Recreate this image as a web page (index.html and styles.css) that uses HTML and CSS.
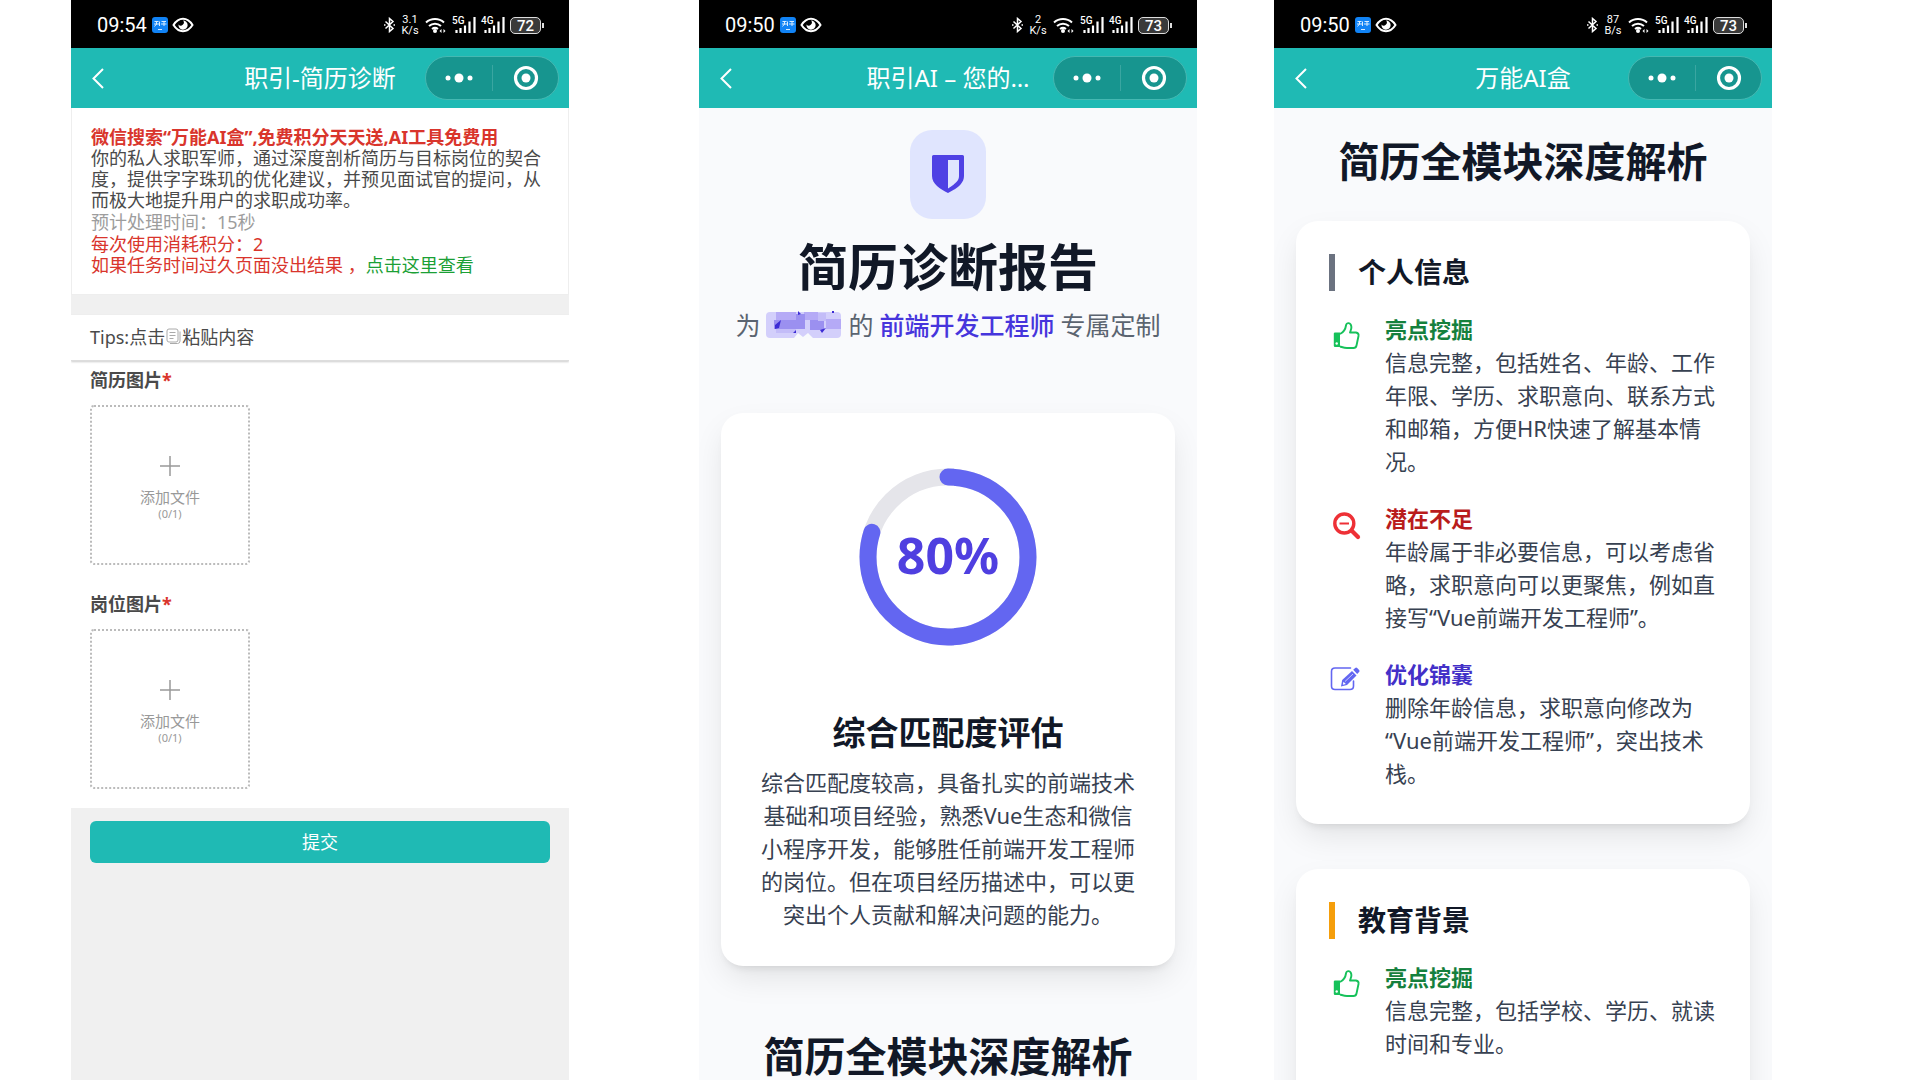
FILE: index.html
```html
<!DOCTYPE html>
<html lang="zh-CN">
<head>
<meta charset="utf-8">
<meta name="viewport" content="width=device-width, initial-scale=1">
<title>职引-简历诊断</title>
<link rel="stylesheet" href="styles.css">
</head>
<body>
<svg class="sprite" aria-hidden="true">
  <symbol id="app" viewBox="0 0 16 16">
    <rect width="16" height="16" rx="3" fill="#1183f5"/>
    <path d="M2.500 4.500h4M4.500 4.500v3M2 7h5M4.500 7 2.500 9.500M7.500 4.500v4.500M9.500 4.500h4.500M9 7h5.500M12 4.500v4.500M6 12.500h4" stroke="#d8ecff" fill="none"/>
  </symbol>
  <symbol id="eye" viewBox="0 0 22 16">
    <path d="M1.500 8C4 4 7.500 1.800 11 1.800S18 4 20.500 8C18 12 14.500 14.200 11 14.200S4 12 1.500 8z" fill="none" stroke="#fff" stroke-width="2"/>
    <path d="M11 3.500a3 3 0 0 1-4.500 4A4.600 4.600 0 1 0 11 3.500z" fill="#fff"/>
  </symbol>
  <symbol id="bluetooth" viewBox="0 0 11 16">
    <path d="M1.500 4.500 9 11.500 5.500 14.500V1.500L9 4.500 1.500 11.500" fill="none" stroke="#fff" stroke-width="1.500"/>
    <path d="M0 8h1.500M9.500 8H11" stroke="#fff" stroke-width="1.500"/>
  </symbol>
  <symbol id="wifi" viewBox="0 0 21 16">
    <g fill="none" stroke="#fff" stroke-width="2"><path d="M1 5.500a13.500 13.500 0 0 1 18 0"/><path d="M4 9a9 9 0 0 1 12 0"/><path d="M7 12a5 5 0 0 1 6 0"/></g>
    <circle cx="10" cy="14" r="2" fill="#fff"/>
    <path d="M14.500 14l2-2v4zM20.500 14l-2-2v4z" fill="#fff"/>
  </symbol>
  <symbol id="bars" viewBox="0 0 21 16">
    <path d="M1.500 13v3M5.500 11v5M10 8.500V16M14.500 4.500V16M19.500 0v16" stroke="#fff" stroke-width="2.200"/>
  </symbol>
  <symbol id="back" viewBox="0 0 12 21"><path d="M11 1 1.500 10.500 11 20" fill="none" stroke="#fff" stroke-width="2"/></symbol>
  <symbol id="more" viewBox="0 0 28 10"><g fill="#fff"><circle cx="3" cy="5" r="2.500"/><circle cx="14" cy="5" r="4.500"/><circle cx="25" cy="5" r="2.500"/></g></symbol>
  <symbol id="target" viewBox="0 0 26 26"><circle cx="13" cy="13" r="10.500" fill="none" stroke="#fff" stroke-width="3.200"/><circle cx="13" cy="13" r="4.500" fill="#fff"/></symbol>
  <symbol id="plus" viewBox="0 0 20 20"><path d="M10 0v20M0 10h20" stroke="#999" stroke-width="1.500"/></symbol>
  <symbol id="thumb" viewBox="0 0 34 30">
    <g transform="translate(4)"><path d="M7 13C11 11 12.500 8 13 4.500 13.300 1.200 18 1 18.400 6c.1 2-1 4-1.400 5.500h6q3 .5 2.500 3.500l-2 9.500q-.5 2.500-3 2.500H14c-3 0-5-1-7-1.500" fill="none" stroke="#16c15a" stroke-width="1.900" stroke-linejoin="round"/>
    <path d="M2 11.500h5v14.500H2q-1.200 0-1.200-1.200V12.700q0-1.200 1.200-1.200z" fill="#16c15a"/><circle cx="3.700" cy="22.500" r="1.200" fill="#fff"/></g>
  </symbol>
  <symbol id="lens" viewBox="0 0 34 30">
    <g transform="translate(3 1)" fill="none" stroke="#ee3036"><circle cx="12.300" cy="12.500" r="9.500" stroke-width="3.400"/><path d="M7.500 12.500h9.500" stroke-width="2"/><path d="M20 20l6 6" stroke-width="4.200" stroke-linecap="round"/></g>
  </symbol>
  <symbol id="edit" viewBox="0 0 34 30">
    <g transform="translate(1)"><path d="M20.500 2H5Q1.500 2 1.500 5.500V20Q1.500 23.500 5 23.500H20Q23.500 23.500 23.500 20V15" fill="none" stroke="#6366f1" stroke-width="1.600" stroke-linecap="round"/>
    <path d="M11 20.500l1.200-6.500L22 5l4.500 4.500L17 19z" fill="#6366f1"/><path d="M15 15.500l8-7.500" stroke="#c9caff"/><path d="M12.800 18.700l.7-3 2.300 2.300z" fill="#fff"/>
    <path d="M23.200 3.800l2-1.900q1-.9 2 .1l1.900 2q.9 1 0 2l-1.900 2z" fill="#6366f1"/></g>
  </symbol>
</svg>

<main class="board">
  <section class="phone phone-form">
    <div class="status">
      <span class="time">09:54</span><svg class="i-app"><use href="#app"/></svg><svg class="i-eye"><use href="#eye"/></svg>
      <div class="signals">
        <svg class="i-bt"><use href="#bluetooth"/></svg><span class="speed">3.1<br>K/s</span><svg class="i-wifi"><use href="#wifi"/></svg>
        <span class="cell"><b>5G</b><svg><use href="#bars"/></svg></span><span class="cell"><b>4G</b><svg><use href="#bars"/></svg></span><span class="battery">72</span>
      </div>
    </div>
    <header class="nav">
      <button class="back" aria-label="返回"><svg><use href="#back"/></svg></button>
      <h1>职引-简历诊断</h1>
      <div class="capsule"><button aria-label="更多"><svg class="i-more"><use href="#more"/></svg></button><button aria-label="关闭"><svg class="i-target"><use href="#target"/></svg></button></div>
    </header>
    <div class="intro">
      <p class="promo">微信搜索“万能AI盒”,免费积分天天送,AI工具免费用</p>
      <p>你的私人求职军师，通过深度剖析简历与目标岗位的契合度，提供字字珠玑的优化建议，并预见面试官的提问，从而极大地提升用户的求职成功率。</p>
      <p class="muted">预计处理时间：15秒</p>
      <p class="red">每次使用消耗积分：2</p>
      <p class="red">如果任务时间过久页面没出结果 ，<a href="#result">点击这里查看</a></p>
    </div>
    <p class="tips">Tips:点击<svg viewBox="0 0 15 16"><path d="M3 1h7q2 0 2 2v9q0 2-2 2H3q-2 0-2-2V3q0-2 2-2zM3.500 4.500h6M3.500 7.500h6M3.500 10.500h4M14 3.500V13q0 2.500-2.500 2.500H4" fill="none" stroke="#aaa"/></svg>粘贴内容</p>
    <form class="form">
      <div class="fields">
        <label class="name" for="resume">简历图片<em>*</em></label>
        <label class="upload"><input type="file" id="resume"><svg><use href="#plus"/></svg><span>添加文件</span><small>(0/1)</small></label>
        <label class="name" for="job">岗位图片<em>*</em></label>
        <label class="upload"><input type="file" id="job"><svg><use href="#plus"/></svg><span>添加文件</span><small>(0/1)</small></label>
      </div>
      <button class="submit" type="button">提交</button>
    </form>
  </section>

  <section class="phone phone-report">
    <div class="status">
      <span class="time">09:50</span><svg class="i-app"><use href="#app"/></svg><svg class="i-eye"><use href="#eye"/></svg>
      <div class="signals">
        <svg class="i-bt"><use href="#bluetooth"/></svg><span class="speed">2<br>K/s</span><svg class="i-wifi"><use href="#wifi"/></svg>
        <span class="cell"><b>5G</b><svg><use href="#bars"/></svg></span><span class="cell"><b>4G</b><svg><use href="#bars"/></svg></span><span class="battery">73</span>
      </div>
    </div>
    <header class="nav">
      <button class="back" aria-label="返回"><svg><use href="#back"/></svg></button>
      <h1>职引AI – 您的…</h1>
      <div class="capsule"><button aria-label="更多"><svg class="i-more"><use href="#more"/></svg></button><button aria-label="关闭"><svg class="i-target"><use href="#target"/></svg></button></div>
    </header>
    <div class="report">
      <div class="badge"><svg viewBox="0 0 32 38"><path fill="#4f41e4" fill-rule="evenodd" d="M1.500 0h29q1.500 0 1.500 1.500V21c0 8-8 13-16 17C8 34 0 29 0 21V1.500Q0 0 1.500 0zM16 5v28.500c6-4 11-7 11-12.500V5z"/></svg></div>
      <h2 class="title">简历诊断报告</h2>
      <p class="subtitle">为
        <svg class="mosaic" viewBox="0 0 76 28" role="img" aria-label="姓名已隐藏"><rect y="1" width="75" height="26" rx="4" fill="#d3cffb"/><path d="M10 1h20v9H10zM38 1h14v8H38zM60 8h15v10H60z" fill="#b5aaf6"/><path d="M8 9h22v9H8zM30 3h9v15h-9zM44 9h14v10H44z" fill="#9b90f0"/><path d="M52 2h8v8h-8zM10 18h20v4H10z" fill="#c3bcf8"/><path d="M28 27l4-5 5 4 5-4 5 5z" fill="#f8fafc"/><path d="M9 14l6-5-2 8-4 1zM32 0l3 3-3 1zM54 19l6-2-4 5zM27 22l3-3v3zM66 0h2v2h-2z" fill="#3d2cd5"/></svg>
        的 <strong>前端开发工程师</strong> 专属定制</p>
      <article class="card score">
        <div class="ring">
          <svg viewBox="0 0 178 178"><circle class="track" cx="89" cy="89" r="80"/><circle class="value" cx="89" cy="89" r="80" pathLength="100" transform="rotate(-90 89 89)"/></svg>
          <span>80%</span>
        </div>
        <h3>综合匹配度评估</h3>
        <p>综合匹配度较高，具备扎实的前端技术基础和项目经验，熟悉Vue生态和微信小程序开发，能够胜任前端开发工程师的岗位。但在项目经历描述中，可以更突出个人贡献和解决问题的能力。</p>
      </article>
      <h2 class="section">简历全模块深度解析</h2>
    </div>
  </section>

  <section class="phone phone-detail">
    <div class="status">
      <span class="time">09:50</span><svg class="i-app"><use href="#app"/></svg><svg class="i-eye"><use href="#eye"/></svg>
      <div class="signals">
        <svg class="i-bt"><use href="#bluetooth"/></svg><span class="speed">87<br>B/s</span><svg class="i-wifi"><use href="#wifi"/></svg>
        <span class="cell"><b>5G</b><svg><use href="#bars"/></svg></span><span class="cell"><b>4G</b><svg><use href="#bars"/></svg></span><span class="battery">73</span>
      </div>
    </div>
    <header class="nav">
      <button class="back" aria-label="返回"><svg><use href="#back"/></svg></button>
      <h1>万能AI盒</h1>
      <div class="capsule"><button aria-label="更多"><svg class="i-more"><use href="#more"/></svg></button><button aria-label="关闭"><svg class="i-target"><use href="#target"/></svg></button></div>
    </header>
    <div class="report detail">
      <h2 class="section">简历全模块深度解析</h2>
      <article class="card module">
        <h3>个人信息</h3>
        <div class="item good"><svg><use href="#thumb"/></svg><div><h4>亮点挖掘</h4><p>信息完整，包括姓名、年龄、工作年限、学历、求职意向、联系方式和邮箱，方便HR快速了解基本情况。</p></div></div>
        <div class="item bad"><svg><use href="#lens"/></svg><div><h4>潜在不足</h4><p>年龄属于非必要信息，可以考虑省略，求职意向可以更聚焦，例如直接写“Vue前端开发工程师”。</p></div></div>
        <div class="item idea"><svg><use href="#edit"/></svg><div><h4>优化锦囊</h4><p>删除年龄信息，求职意向修改为“Vue前端开发工程师”，突出技术栈。</p></div></div>
      </article>
      <article class="card module education">
        <h3>教育背景</h3>
        <div class="item good"><svg><use href="#thumb"/></svg><div><h4>亮点挖掘</h4><p>信息完整，包括学校、学历、就读时间和专业。</p></div></div>
      </article>
    </div>
  </section>
</main>
</body>
</html>
```
FILE: styles.css
```css
* { box-sizing: border-box; }
body, h1, h2, h3, h4, p { margin: 0; }
body {
  background: #fff;
  color: #4a4a4a;
  font-family: "Noto Sans", "Noto Sans CJK SC", sans-serif;
}
button {
  padding: 0;
  border: 0;
  background: none;
  font-family: inherit;
  cursor: pointer;
}
svg { display: block; flex: none; }
.sprite { position: absolute; width: 0; height: 0; }

.board {
  display: grid;
  grid-template-columns: 71fr 498fr 130fr 498fr 77fr 498fr 148fr;
}
.phone {
  display: flex;
  flex-direction: column;
  min-width: 0;
  height: 100vh;
  overflow: hidden auto;
  scrollbar-width: none;
}
.phone > * { flex: none; }
.phone-form { grid-column: 2; background: #f0f0f0; }
.phone-report { grid-column: 4; background: #f9fafc; }
.phone-detail { grid-column: 6; background: #f9fafc; }

/* Status bar */
.status {
  display: flex;
  align-items: center;
  height: 48px;
  padding: 2px 28px 0 26px;
  background: #000;
  color: #fff;
}
.time { font: 20px/24px Roboto, sans-serif; }
.i-app { width: 16px; height: 16px; margin: 0 4px 0 5px; }
.i-eye { width: 22px; height: 16px; }
.signals { display: flex; align-items: center; gap: 6px; margin-left: auto; }
.i-bt { width: 11px; height: 16px; }
.speed { width: 18px; font: 11px/11px Roboto, sans-serif; text-align: center; }
.i-wifi { width: 21px; height: 16px; }
.cell { position: relative; width: 23px; height: 16px; }
.cell svg { width: 21px; height: 16px; margin-left: 3px; }
.cell b { position: absolute; top: -1px; left: 0; font: 500 10px/10px Roboto, sans-serif; }
.battery {
  position: relative;
  width: 31px;
  height: 17px;
  border: 1px solid #ddd;
  border-radius: 5px;
  background: #3a3a3a;
  font: 500 15px/16px Roboto, sans-serif;
  text-align: center;
}
.battery::after {
  content: "";
  position: absolute;
  top: 5px;
  right: -4px;
  width: 2px;
  height: 5px;
  background: #ddd;
}

/* Navigation bar */
.nav {
  display: grid;
  grid-template-columns: 134px 1fr 134px;
  align-items: center;
  height: 60px;
  padding: 0 10px;
  background: #1fbab4;
  color: #fff;
}
.nav h1 { font-size: 24px; font-weight: 400; line-height: 36px; text-align: center; white-space: nowrap; }
.back { padding: 0 11px; justify-self: start; }
.back svg { width: 12px; height: 21px; }
.capsule {
  display: grid;
  grid-template-columns: 1fr 1fr;
  align-items: center;
  height: 44px;
  border: 1px solid #45b8b2;
  border-radius: 22px;
  background: #17958f;
}
.capsule button { display: grid; place-items: center; height: 26px; }
.capsule button + button { border-left: 1px solid #3aa6a1; }
.i-more { width: 28px; height: 10px; }
.i-target { width: 26px; height: 26px; }

/* Diagnosis form */
.intro {
  min-height: 187px;
  padding: 19px 19px 18px;
  border: 1px solid #eee;
  border-top: 0;
  background: #fff;
  font-size: 18px;
  line-height: 21px;
}
.promo { color: #d9352c; font-weight: 700; }
.muted { margin: 1px 0; color: #9d9d9d; }
.red { color: #d9352c; }
.intro a { color: #1ba035; text-decoration: none; }
.tips {
  display: flex;
  align-items: center;
  height: 46px;
  margin-top: 20px;
  padding: 0 19px 3px;
  border-bottom: 1px solid #ddd;
  background: #fff;
  box-shadow: 0 1px 2px #ccc;
  font-size: 18px;
  z-index: 1;
}
.tips svg { width: 15px; height: 16px; margin: 0 1px; }
.fields {
  display: flex;
  flex-direction: column;
  align-items: flex-start;
  padding: 6px 19px 19px;
  background: #fff;
}
.name { margin-bottom: 11px; font-size: 18px; font-weight: 700; line-height: 27px; }
.name em { color: #d9352c; font-style: normal; }
.upload {
  display: flex;
  flex-direction: column;
  align-items: center;
  justify-content: center;
  width: 160px;
  height: 160px;
  padding-top: 5px;
  border: 2px dotted #bbb;
  border-radius: 4px;
  color: #999;
  cursor: pointer;
}
.upload + .name { margin-top: 26px; }
.upload input { position: absolute; width: 1px; height: 1px; opacity: 0; }
.upload svg { width: 20px; height: 20px; margin-bottom: 10px; }
.upload span { font-size: 15px; line-height: 22px; }
.upload small { font-size: 11px; line-height: 11px; }
.submit {
  display: block;
  width: calc(100% - 38px);
  height: 42px;
  margin: 13px 19px;
  padding-bottom: 2px;
  border-radius: 6px;
  background: #1fbab4;
  color: #fff;
  font-size: 18px;
}

/* Report */
.report {
  display: flex;
  flex-direction: column;
  padding: 22px 22px 44px;
  color: #374151;
  font-size: 22px;
  line-height: 33px;
}
.report h2, .report h3 { color: #111827; font-weight: 700; }
.badge {
  display: grid;
  place-items: center;
  align-self: center;
  width: 76px;
  height: 89px;
  border-radius: 22px;
  background: #e0e5fe;
}
.badge svg { width: 32px; height: 38px; margin-bottom: 2px; }
.title { margin-top: 21px; font-size: 50px; line-height: 55px; text-align: center; }
.subtitle {
  display: flex;
  justify-content: center;
  gap: 6px;
  margin: 13px 0 71px;
  color: #5b6470;
  font-size: 25px;
  line-height: 34px;
  white-space: nowrap;
}
.subtitle strong { color: #4635dc; font-weight: 500; }
.mosaic { width: 76px; height: 28px; align-self: center; }
.section { font-size: 41px; line-height: 42px; text-align: center; white-space: nowrap; }
.card {
  padding: 33px;
  border-radius: 22px;
  background: #fff;
  box-shadow: 0 14px 32px -4px rgba(0, 0, 0, 0.1), 0 6px 10px -6px rgba(0, 0, 0, 0.14);
}
.score { margin-bottom: 69px; padding-bottom: 35px; text-align: center; }
.ring { display: grid; place-items: center; height: 222px; margin-bottom: 43px; }
.ring > * { grid-area: 1 / 1; }
.ring svg { width: 178px; height: 178px; }
.ring circle { fill: none; stroke-width: 17px; }
.track { stroke: #e5e5ea; }
.value { stroke: #6366f1; stroke-dasharray: 80 100; stroke-linecap: round; }
.ring span { padding-bottom: 4px; color: #4f3fe0; font-size: 50px; font-weight: 700; line-height: 60px; }
.score h3 { margin-bottom: 11px; font-size: 33px; line-height: 44px; }

/* Resume modules */
.detail { padding-top: 32px; }
.detail .section { margin-bottom: 39px; }
.module { display: flex; flex-direction: column; gap: 22px; padding-bottom: 34px; }
.module + .module { margin-top: 45px; }
.module h3 {
  padding-left: 23px;
  border-left: 6px solid #6b7280;
  font-size: 28px;
  line-height: 37px;
}
.education { min-height: 320px; }
.education h3 { border-color: #f59e0b; }
.item { display: grid; grid-template-columns: 34px 1fr; gap: 22px; }
.item + .item { margin-top: 2px; }
.item svg { width: 34px; height: 30px; margin-top: 8px; }
.item h4 { font-size: 22px; font-weight: 600; }
.good h4 { color: #15803d; }
.bad h4 { color: #b91c1c; }
.idea h4 { color: #4330c8; }
```
